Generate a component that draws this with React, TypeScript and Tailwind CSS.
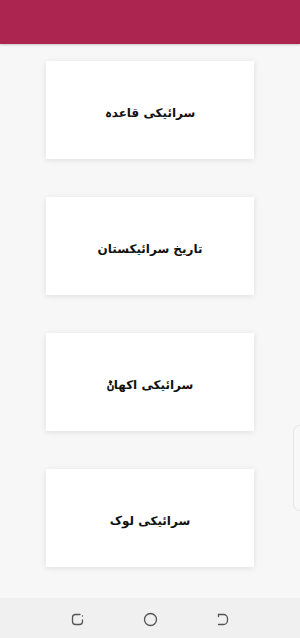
import React from "react";

const items = ["سرائیکی قاعدہ", "تاریخ سرائیکستان", "سرائیکی اکھاݨ", "سرائیکی لوک"];

export default function App() {
  return (
    <div className="w-[300px] h-[638px] bg-[#f7f7f7] flex flex-col relative overflow-hidden" style={{ fontFamily: '"DejaVu Sans", "Noto Sans", sans-serif' }}>
      <div className="h-[44px] bg-[#ab2550] shrink-0 shadow-[0_1px_2px_rgba(0,0,0,0.2)]" />
      <div className="flex-1 flex flex-col items-center pt-[17px] gap-[38px]">
        {items.map((t) => (
          <div key={t} dir="rtl" className="w-[208px] h-[98px] bg-white shadow-[0_1px_6px_rgba(0,0,0,0.10)] flex items-center justify-center pt-[5px]">
            <span className="text-[12px] font-semibold text-[#111] tracking-[-0.3px]">{t}</span>
          </div>
        ))}
      </div>
      <div className="absolute right-0 top-[425px] w-[7px] h-[86px] rounded-l-[8px] border border-r-0 border-[#e6e6e6] bg-[#f8f8f8]" />
      <div className="h-[40px] bg-[#f0f0f0] shrink-0 flex items-center justify-center gap-[56px] pt-[2px]">
        <svg width="17" height="17" viewBox="0 0 17 17" fill="none" stroke="#555" strokeWidth="1.3">
          <path d="M11 3.5H6.5a3 3 0 0 0-3 3v4a3 3 0 0 0 3 3h4a3 3 0 0 0 3-3V9" strokeLinecap="round" />
          <circle cx="13.5" cy="5" r="0.7" fill="#555" stroke="none" />
        </svg>
        <svg width="17" height="17" viewBox="0 0 17 17" fill="none" stroke="#555" strokeWidth="1.3">
          <circle cx="8.5" cy="8.5" r="6" />
        </svg>
        <svg width="17" height="17" viewBox="0 0 17 17" fill="none" stroke="#555" strokeWidth="1.3">
          <path d="M3.5 3.5h5a4 4 0 0 1 4 4v2a4 4 0 0 1-4 4h-5" strokeLinecap="round" />
          <path d="M3.5 3.5v2" strokeLinecap="round" />
        </svg>
      </div>
    </div>
  );
}
